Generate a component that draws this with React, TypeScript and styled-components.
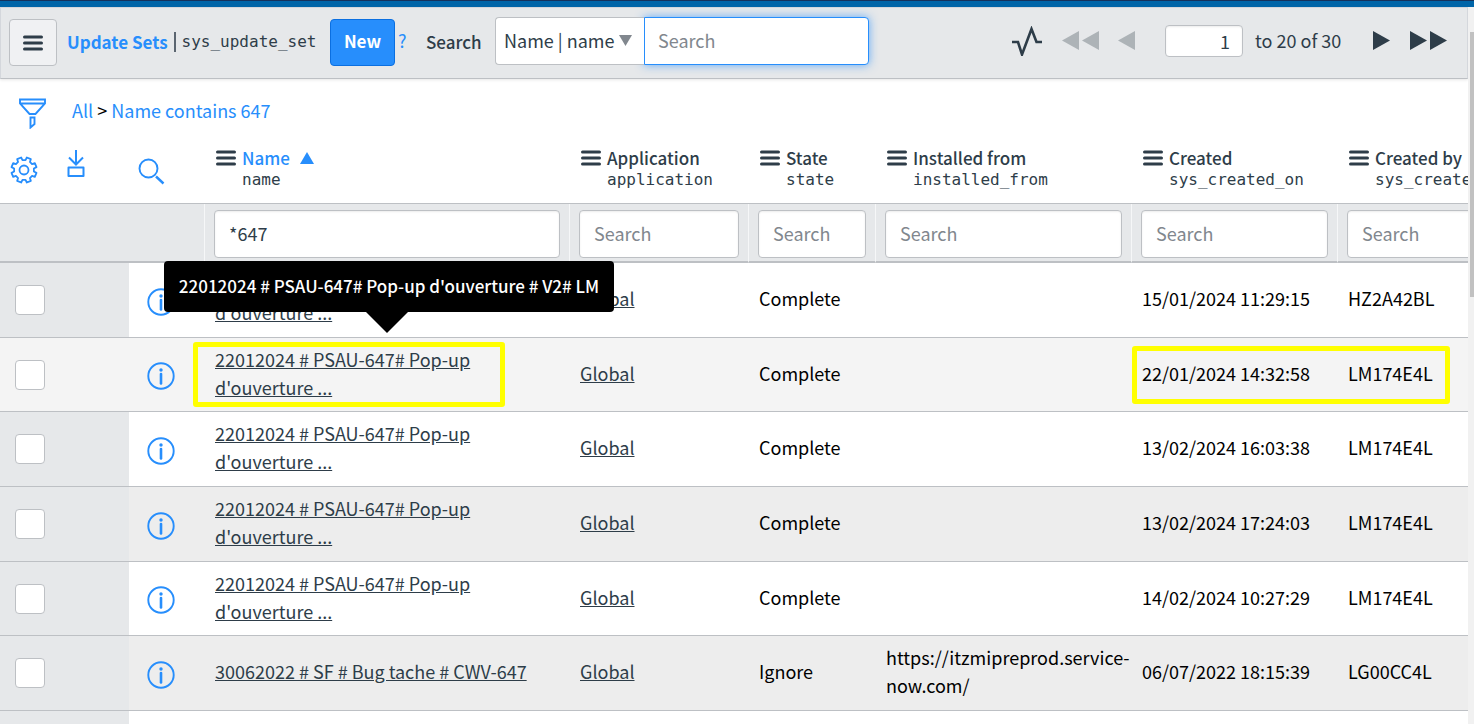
import React from "react";
import styled, { createGlobalStyle } from "styled-components";

const blue = "#278efc";
const ink = "#2e3d49";
const line = "#bdc0c4";
const panel = "#e6e8ea";
const sans = '"Noto Sans CJK SC", "Noto Sans", sans-serif';
const mono = '"DejaVu Sans Mono", "Liberation Mono", monospace';

const GlobalStyle = createGlobalStyle`
  * { box-sizing: border-box; }
  body { margin: 0; background: #fff; color: #000; font: 400 18px/28px ${sans}; }
  button, input, select { font: inherit; color: inherit; }
  svg { display: block; flex: none; }
`;

const Page = styled.div`
  height: 100vh;
  display: flex;
  flex-direction: column;
  overflow: hidden;
`;

const TopStripe = styled.div`
  flex: none;
  height: 7px;
  background: #0065a8;
  border-top: 1px solid #16325c;
`;

const Body = styled.div`
  flex: 1;
  min-height: 0;
  display: flex;
`;

const Main = styled.main`
  flex: 1;
  min-width: 0;
  overflow: hidden;
`;

const ScrollTrack = styled.div`
  flex: none;
  width: 6px;
  padding: 25px 0 0 2px;
  background: #f1f1f1;
`;

const ScrollThumb = styled.div`
  height: 265px;
  background: #c1c1c1;
`;

const Toolbar = styled.header`
  display: flex;
  align-items: center;
  height: 72px;
  padding: 0 20px 2px 8px;
  background: ${panel};
  color: ${ink};
  border: 1px solid #d4d7dc;
  border-bottom-color: ${line};
  box-shadow: 0 1px 3px rgba(0, 0, 0, 0.1);
`;

const MenuButton = styled.button`
  display: flex;
  align-items: center;
  justify-content: center;
  width: 48px;
  height: 47px;
  padding: 2px 0 0;
  border: 1px solid ${line};
  border-radius: 4px;
  background: #f0f1f3;
`;

const Title = styled.h1`
  display: flex;
  align-items: center;
  width: 263px;
  margin: 0 0 0 10px;
  font-size: 17px;
  font-weight: 500;
  white-space: nowrap;
`;

const TitleLink = styled.a`
  color: ${blue};
  text-decoration: none;
  font-weight: 700;
`;

const Bar = styled.span`
  width: 2px;
  height: 20px;
  margin: 0 6px;
  background: #5b6570;
`;

const Technical = styled.span`
  font: 400 16px/22px ${mono};
`;

const NewButton = styled.button`
  width: 65px;
  height: 47px;
  padding: 0 0 2px;
  border: 1px solid #0b6fe0;
  border-radius: 4px;
  background: ${blue};
  color: #fff;
  font-size: 17px;
  font-weight: 700;
`;

const HelpLink = styled.a`
  width: 31px;
  padding: 0 0 4px 3px;
  color: ${blue};
  text-decoration: none;
`;

const SearchLabel = styled.label`
  width: 69px;
  font-size: 17px;
  font-weight: 500;
`;

const SelectWrap = styled.div`
  position: relative;
  width: 149px;
  margin-bottom: 2px;
`;

const FieldSelect = styled.select`
  appearance: none;
  display: block;
  width: 100%;
  height: 48px;
  padding: 0 24px 2px 8px;
  border: 1px solid ${line};
  border-right: 0;
  border-radius: 4px 0 0 4px;
  background: #fff;
`;

const SelectArrow = styled.svg`
  position: absolute;
  right: 12px;
  top: 18px;
  pointer-events: none;
`;

const SearchBox = styled.input`
  width: 225px;
  height: 48px;
  margin-bottom: 2px;
  padding: 0 13px 2px;
  border: 1px solid ${blue};
  border-radius: 0 4px 4px 0;
  background: #fff;
  box-shadow: 0 0 10px rgba(39, 142, 252, 0.7);
  outline: none;
  &::placeholder { color: #81878e; opacity: 1; }
`;

const Pager = styled.nav`
  display: flex;
  align-items: center;
  margin: 0 0 2px auto;
`;

const IconButton = styled.button<{ $gap?: number }>`
  display: block;
  padding: 0;
  margin-right: ${(p) => p.$gap ?? 0}px;
  border: 0;
  background: none;
`;

const PageInput = styled.input`
  width: 78px;
  height: 32px;
  padding: 0 12px;
  border: 1px solid ${line};
  border-radius: 4px;
  background: #fff;
  box-shadow: inset 0 1px 2px rgba(0, 0, 0, 0.08);
  text-align: right;
`;

const PageCount = styled.span`
  width: 118px;
  margin-left: 12px;
  padding-bottom: 2px;
  white-space: nowrap;
`;

const Crumbs = styled.nav`
  display: flex;
  align-items: center;
  height: 64px;
  padding: 4px 0 0 18px;
`;

const CrumbText = styled.div`
  margin-left: 25px;
  padding-bottom: 6px;
  a { color: ${blue}; text-decoration: none; }
`;

const List = styled.table`
  width: 100%;
  min-width: 1530px;
  table-layout: fixed;
  border-collapse: separate;
  border-spacing: 0;
  th, td { padding: 0; text-align: left; }
`;

const Col = styled.col<{ $w?: number }>`
  width: ${(p) => (p.$w ? `${p.$w}px` : "auto")};
`;

const HeadCell = styled.th`
  height: 61px;
  border-bottom: 1px solid ${line};
  color: ${ink};
  font-size: 17px;
  font-weight: 500;
  vertical-align: top;
`;

const Tools = styled.div<{ $left: number; $top: number }>`
  display: flex;
  align-items: flex-start;
  gap: 29px;
  padding: ${(p) => p.$top}px 0 0 ${(p) => p.$left}px;
`;

const HeadGrid = styled.div`
  display: grid;
  grid-template-columns: 20px 1fr;
  column-gap: 6px;
  align-items: center;
  padding: 4px 0 0 12px;
  line-height: 22px;
  white-space: nowrap;
`;

const HeadTitle = styled.span<{ $sorted?: boolean }>`
  display: flex;
  align-items: center;
  gap: 10px;
  color: ${(p) => (p.$sorted ? blue : ink)};
`;

const HeadTechnical = styled(Technical)`
  grid-column: 2;
`;

const FilterCell = styled.td<{ $edge?: boolean }>`
  && { padding: ${(p) => (p.$edge ? "6px 9px 3px" : "0")}; }
  height: 59px;
  background: ${panel};
  border-bottom: 2px solid ${line};
  border-left: ${(p) => (p.$edge ? "1px solid #f6f7f8" : "0")};
`;

const FilterInput = styled.input`
  display: block;
  width: 100%;
  height: 48px;
  padding: 0 14px 2px;
  border: 1px solid ${line};
  border-radius: 4px;
  background: #fff;
  color: ${ink};
  box-shadow: inset 0 1px 2px rgba(0, 0, 0, 0.08);
  &::placeholder { color: #81878e; opacity: 1; }
`;

const Cell = styled.td`
  && { padding: 0 4px 4px 11px; }
  position: relative;
  border-bottom: 1px solid ${line};
  vertical-align: middle;
`;

const CheckCell = styled(Cell)`
  && { padding: 0 0 0 15px; }
`;

const InfoCell = styled(Cell)`
  && { padding: 3px 0 0 18px; }
`;

const Row = styled.tr<{ $tone: "plain" | "shade" | "hover" }>`
  height: 75px;
  background: ${(p) => ({ plain: "#fff", shade: "#ededed", hover: "#f4f4f4" })[p.$tone]};
  &:nth-child(3n) { height: 74px; }
  ${CheckCell} { background: ${(p) => (p.$tone === "hover" ? "#f4f4f4" : panel)}; }
`;

const Check = styled.input`
  appearance: none;
  display: block;
  width: 30px;
  height: 30px;
  margin: 0;
  border: 1px solid ${line};
  border-radius: 4px;
  background: #fff;
`;

const CellLink = styled.a<{ $wrap?: boolean }>`
  display: block;
  max-width: ${(p) => (p.$wrap ? "320px" : "none")};
  color: ${ink};
  text-decoration: underline;
`;

const Highlight = styled.div<{ $x: number; $y: number; $w: number; $h: number }>`
  position: absolute;
  left: ${(p) => p.$x}px;
  top: ${(p) => p.$y}px;
  width: ${(p) => p.$w}px;
  height: ${(p) => p.$h}px;
  border: 5px solid #ff0;
  border-radius: 3px;
  pointer-events: none;
  z-index: 1;
`;

const Tooltip = styled.div`
  position: absolute;
  left: -40px;
  top: -77px;
  z-index: 2;
  min-width: 450px;
  padding: 11px 12px 12px;
  border-radius: 4px;
  background: #000;
  color: #fff;
  font-size: 17px;
  font-weight: 500;
  text-align: center;
  white-space: nowrap;
  &::after {
    content: "";
    position: absolute;
    left: 202px;
    top: 100%;
    border: 21px solid transparent;
    border-top-color: #000;
    border-bottom: 0;
  }
`;

const Burger = () => (
  <svg width="20" height="16" viewBox="0 0 20 16" stroke={ink} strokeWidth="3" strokeLinecap="round" aria-hidden="true">
    <path d="M1.5 2h17M1.5 8h17M1.5 14h17" />
  </svg>
);

const Arrows = ({ count, back }: { count: number; back?: boolean }) => (
  <svg width={count * 20 - 3} height="20" viewBox={`0 0 ${count * 20 - 3} 20`} fill={back ? "#adb3b7" : ink} aria-hidden="true">
    {Array.from({ length: count }, (_, i) => (
      <path key={i} d={back ? `M${i * 20 + 17} 0v19L${i * 20} 9.500z` : `M${i * 20} 0v19L${i * 20 + 17} 9.500z`} />
    ))}
  </svg>
);

const Pulse = () => (
  <svg width="32" height="30" viewBox="0 0 32 30" fill="none" stroke={ink} strokeWidth="2.600" aria-hidden="true">
    <path d="M1 16h6l4 12.500L20.500 3l5 13H31" />
  </svg>
);

const Funnel = () => (
  <svg width="29" height="31" viewBox="0 0 29 31" fill="none" stroke={blue} strokeWidth="1.900" aria-hidden="true">
    <path d="M2 1.500h25v4L17.500 16h-6L2 5.500zM2 5.500h25" />
    <path d="M12.500 19.500h4v6.500l-4 3.500z" />
  </svg>
);

const gearPoints = (() => {
  const pts: string[] = [];
  for (let i = 0; i < 8; i++) {
    const a = (i * Math.PI) / 4 + Math.PI / 8;
    [[-0.24, 10], [-0.17, 12.8], [0.17, 12.8], [0.24, 10]].forEach(([d, r]) => {
      pts.push(`${(14 + r * Math.cos(a + d)).toFixed(2)},${(14 + r * Math.sin(a + d)).toFixed(2)}`);
    });
  }
  return pts.join(" ");
})();

const Gear = () => (
  <svg width="28" height="28" viewBox="0 0 28 28" fill="none" stroke={blue} strokeWidth="1.800" strokeLinejoin="round" aria-hidden="true">
    <polygon points={gearPoints} />
    <circle cx="14" cy="14" r="4.500" />
  </svg>
);

const Export = () => (
  <svg width="18" height="28" viewBox="0 0 18 28" fill="none" stroke={blue} strokeWidth="2" aria-hidden="true">
    <path d="M9 0v15M2 7.500l7 7 7-7" />
    <path d="M1.500 17.500h15v8.500h-15z" strokeLinejoin="round" />
  </svg>
);

const Magnifier = () => (
  <svg width="27" height="27" viewBox="0 0 27 27" fill="none" stroke={blue} strokeWidth="1.900" aria-hidden="true">
    <circle cx="10.500" cy="10.500" r="9" />
    <path d="M18 18.500l7.500 7" strokeWidth="2.400" />
  </svg>
);

const Info = () => (
  <svg width="28" height="28" viewBox="0 0 28 28" fill="none" stroke={blue} aria-hidden="true">
    <circle cx="14" cy="14" r="12.700" strokeWidth="1.900" />
    <circle cx="14" cy="8" r="1.700" fill={blue} stroke="none" />
    <path d="M14 12v9.500" strokeWidth="2.600" strokeLinecap="round" />
  </svg>
);

const columns = [
  { title: "Name", tech: "name", value: "*647", sorted: true },
  { title: "Application", tech: "application" },
  { title: "State", tech: "state" },
  { title: "Installed from", tech: "installed_from" },
  { title: "Created", tech: "sys_created_on" },
  { title: "Created by", tech: "sys_created_by" },
];

const popup = "22012024 # PSAU-647# Pop-up d'ouverture ...";
type Tone = "plain" | "shade" | "hover";
const rows: { name: string; state: string; from: string; at: string; by: string; tone: Tone }[] = [
  { name: popup, state: "Complete", from: "", at: "15/01/2024 11:29:15", by: "HZ2A42BL", tone: "plain" },
  { name: popup, state: "Complete", from: "", at: "22/01/2024 14:32:58", by: "LM174E4L", tone: "hover" },
  { name: popup, state: "Complete", from: "", at: "13/02/2024 16:03:38", by: "LM174E4L", tone: "plain" },
  { name: popup, state: "Complete", from: "", at: "13/02/2024 17:24:03", by: "LM174E4L", tone: "shade" },
  { name: popup, state: "Complete", from: "", at: "14/02/2024 10:27:29", by: "LM174E4L", tone: "plain" },
  { name: "30062022 # SF # Bug tache # CWV-647", state: "Ignore", from: "https://itzmipreprod.service-now.com/", at: "06/07/2022 18:15:39", by: "LG00CC4L", tone: "shade" },
];

export default function App() {
  return (
    <Page>
      <GlobalStyle />
      <TopStripe />
      <Body>
        <Main>
          <Toolbar>
            <MenuButton aria-label="List menu"><Burger /></MenuButton>
            <Title>
              <TitleLink href="#sets">Update Sets</TitleLink>
              <Bar />
              <Technical>sys_update_set</Technical>
            </Title>
            <NewButton>New</NewButton>
            <HelpLink href="#help">?</HelpLink>
            <SearchLabel htmlFor="list-search">Search</SearchLabel>
            <SelectWrap>
              <FieldSelect aria-label="Search field">
                <option>Name | name</option>
              </FieldSelect>
              <SelectArrow width="13" height="11" viewBox="0 0 13 11" fill="#81878e" aria-hidden="true">
                <path d="M0 0h13L6.500 11z" />
              </SelectArrow>
            </SelectWrap>
            <SearchBox id="list-search" placeholder="Search" />
            <Pager aria-label="Pages">
              <IconButton aria-label="Activity" $gap={19}><Pulse /></IconButton>
              <IconButton aria-label="First page" $gap={19}><Arrows count={2} back /></IconButton>
              <IconButton aria-label="Previous page" $gap={30}><Arrows count={1} back /></IconButton>
              <PageInput aria-label="First row" defaultValue="1" />
              <PageCount>to 20 of 30</PageCount>
              <IconButton aria-label="Next page" $gap={20}><Arrows count={1} /></IconButton>
              <IconButton aria-label="Last page"><Arrows count={2} /></IconButton>
            </Pager>
          </Toolbar>
          <Crumbs aria-label="Filter">
            <IconButton aria-label="Show filter"><Funnel /></IconButton>
            <CrumbText>
              <a href="#all">All</a> &gt; <a href="#name">Name contains 647</a>
            </CrumbText>
          </Crumbs>
          <List>
            <colgroup>
              <Col $w={129} />
              <Col $w={75} />
              <Col $w={365} />
              <Col $w={179} />
              <Col $w={127} />
              <Col $w={256} />
              <Col $w={206} />
              <Col />
            </colgroup>
            <thead>
              <tr>
                <HeadCell>
                  <Tools $left={10} $top={7}>
                    <IconButton aria-label="Personalize list"><Tools as="span" $left={0} $top={6}><Gear /></Tools></IconButton>
                    <IconButton aria-label="Export"><Export /></IconButton>
                  </Tools>
                </HeadCell>
                <HeadCell>
                  <Tools $left={9} $top={15}>
                    <IconButton aria-label="Search columns"><Magnifier /></IconButton>
                  </Tools>
                </HeadCell>
                {columns.map((c) => (
                  <HeadCell key={c.tech} scope="col">
                    <HeadGrid>
                      <Burger />
                      <HeadTitle $sorted={c.sorted}>
                        {c.title}
                        {c.sorted && (
                          <svg width="14" height="12" viewBox="0 0 14 12" fill={blue} aria-hidden="true">
                            <path d="M0 12h14L7 0z" />
                          </svg>
                        )}
                      </HeadTitle>
                      <HeadTechnical>{c.tech}</HeadTechnical>
                    </HeadGrid>
                  </HeadCell>
                ))}
              </tr>
            </thead>
            <tbody>
              <tr>
                <FilterCell colSpan={2} />
                {columns.map((c) => (
                  <FilterCell key={c.tech} $edge>
                    <FilterInput aria-label={`Search ${c.title}`} placeholder="Search" defaultValue={c.value} />
                  </FilterCell>
                ))}
              </tr>
              {rows.map((r, i) => (
                <Row key={r.at} $tone={r.tone}>
                  <CheckCell><Check type="checkbox" aria-label={`Select ${r.name}`} /></CheckCell>
                  <InfoCell><IconButton aria-label="Preview record"><Info /></IconButton></InfoCell>
                  <Cell>
                    <CellLink href="#record" $wrap>{r.name}</CellLink>
                    {i === 1 && (
                      <>
                        <Highlight $x={-11} $y={4} $w={312} $h={65} />
                        <Tooltip role="tooltip">22012024 # PSAU-647# Pop-up d'ouverture # V2# LM</Tooltip>
                      </>
                    )}
                  </Cell>
                  <Cell><CellLink href="#application">Global</CellLink></Cell>
                  <Cell>{r.state}</Cell>
                  <Cell>{r.from}</Cell>
                  <Cell>
                    {r.at}
                    {i === 1 && <Highlight $x={1} $y={8} $w={318} $h={58} />}
                  </Cell>
                  <Cell>{r.by}</Cell>
                </Row>
              ))}
              <Row $tone="plain">
                <CheckCell />
                <Cell colSpan={7} />
              </Row>
            </tbody>
          </List>
        </Main>
        <ScrollTrack><ScrollThumb /></ScrollTrack>
      </Body>
    </Page>
  );
}
